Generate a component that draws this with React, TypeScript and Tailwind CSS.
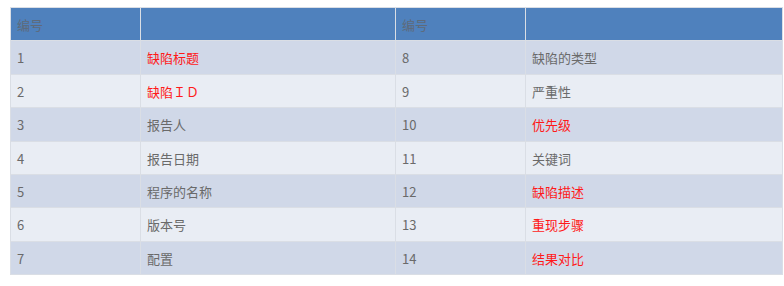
import React from "react";

type Cell = { t: string; red?: boolean };
const rows: [Cell, Cell, Cell, Cell][] = [
  [{ t: "1" }, { t: "缺陷标题", red: true }, { t: "8" }, { t: "缺陷的类型" }],
  [{ t: "2" }, { t: "缺陷ＩＤ", red: true }, { t: "9" }, { t: "严重性" }],
  [{ t: "3" }, { t: "报告人" }, { t: "10" }, { t: "优先级", red: true }],
  [{ t: "4" }, { t: "报告日期" }, { t: "11" }, { t: "关键词" }],
  [{ t: "5" }, { t: "程序的名称" }, { t: "12" }, { t: "缺陷描述", red: true }],
  [{ t: "6" }, { t: "版本号" }, { t: "13" }, { t: "重现步骤", red: true }],
  [{ t: "7" }, { t: "配置" }, { t: "14" }, { t: "结果对比", red: true }],
];
const heights = ["h-[34px]", "h-[33px]", "h-[34px]", "h-[33px]", "h-[33px]", "h-[34px]", "h-[33px]"];

export default function App() {
  return (
    <div
      className="w-[784px] h-[286px] bg-white pt-[7px] pl-[10px]"
      style={{ fontFamily: '"Microsoft YaHei", "Noto Sans CJK SC", "Liberation Sans", sans-serif' }}
    >
      <table className="border-collapse text-[13px] leading-none table-fixed w-[772px]">
        <colgroup>
          <col className="w-[130px]" />
          <col className="w-[255px]" />
          <col className="w-[130px]" />
          <col className="w-[257px]" />
        </colgroup>
        <thead>
          <tr className="h-[33px] bg-[#4f81bd]">
            <td className="border border-[#dadee5] pl-[6px] text-[#5e6a7a] align-middle">编号</td>
            <td className="border border-[#dadee5]"></td>
            <td className="border border-[#dadee5] pl-[6px] text-[#5e6a7a] align-middle">编号</td>
            <td className="border border-[#dadee5]"></td>
          </tr>
        </thead>
        <tbody>
          {rows.map((r, i) => (
            <tr key={i} className={`${heights[i]} ${i % 2 === 0 ? "bg-[#d0d8e8]" : "bg-[#e9edf4]"}`}>
              {r.map((c, j) => (
                <td
                  key={j}
                  className={`border border-[#dadee5] pl-[6px] align-middle ${
                    c.red ? "text-[#ff1a1a]" : "text-[#6a6a6a]"
                  }`}
                >
                  {c.t}
                </td>
              ))}
            </tr>
          ))}
        </tbody>
      </table>
    </div>
  );
}
